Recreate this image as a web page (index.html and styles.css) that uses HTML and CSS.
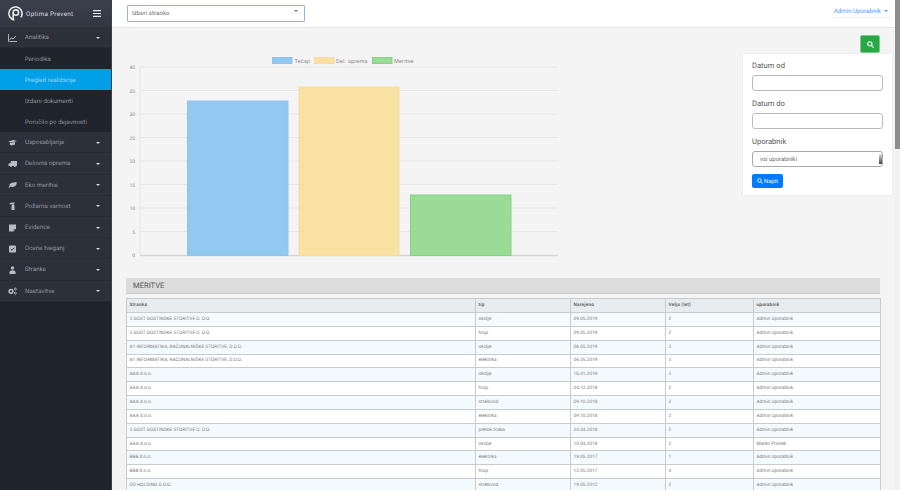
FILE: index.html
```html
<!DOCTYPE html>
<html lang="sl">
<head>
<meta charset="utf-8">
<title>Optima Prevent</title>
<link rel="stylesheet" href="styles.css">
</head>
<body>
<div class="app">
  <aside class="sidebar">
    <div class="brand">
      <svg class="logo" viewBox="0 0 16 16"><circle cx="8" cy="8" r="7" fill="none" stroke="#e8e9ec" stroke-width="1.700" stroke-dasharray="36 8" transform="rotate(100 8 8)"/><circle cx="8.400" cy="7" r="2.900" fill="none" stroke="#e8e9ec" stroke-width="1.700"/><path d="M5.500 7v8" stroke="#e8e9ec" stroke-width="1.700"/></svg>
      <span class="brand-name">Optima Prevent</span>
      <svg class="burger" viewBox="0 0 8 7"><path d="M0 .6h8M0 3.500h8M0 6.400h8" stroke="#e4e5e8" stroke-width="1.200"/></svg>
    </div>
    <nav class="menu">
      <div class="item open"><svg class="ico" viewBox="0 0 9 8"><path d="M.5 0v7.500H9" fill="none" stroke="#b9bcc5" stroke-width=".9"/><path d="M1.500 6l2-2.200 1.500 1.200L8 2" fill="none" stroke="#b9bcc5" stroke-width="1"/></svg><span>Analitika</span><i class="caret"></i></div>
      <div class="sub">Periodika</div>
      <div class="sub active">Pregled realizacije</div>
      <div class="sub">Izdani dokumenti</div>
      <div class="sub">Poročilo po dejavnosti</div>
      <div class="item"><svg class="ico" viewBox="0 0 9 8"><path d="M0 2.400L5.500 1 9 2 3.600 3.600zM1.800 3.600v2.200l1.800.8L7 5.400V3L3.600 4.100z" fill="#b9bcc5"/></svg><span>Usposabljanje</span><i class="caret"></i></div>
      <div class="item"><svg class="ico" viewBox="0 0 9 8"><path d="M3 1h6v5H8a1 1 0 0 1-2 0H4a1 1 0 0 1-2 0H.5V3.800L3 2.600z" fill="#b9bcc5"/></svg><span>Delovna oprema</span><i class="caret"></i></div>
      <div class="item"><svg class="ico" viewBox="0 0 9 8"><path d="M8.600 1C9 4.500 6.500 6.400 3.600 5.800 2.600 5.600 1.800 6.200 1 7L.5 6.500C1.200 5.800 1.700 5 1.500 4.200 1.400 2 4.500 1.800 8.600 1z" fill="#b9bcc5"/></svg><span>Eko meritve</span><i class="caret"></i></div>
      <div class="item"><svg class="ico" viewBox="0 0 9 8"><path d="M1.500 1.200L4 .6h2.500v1L5.500 2v.6a1.500 1.500 0 0 1 1 1.400V8h-3V4a1.500 1.500 0 0 1 1-1.400V2L2 2.600z" fill="#b9bcc5"/></svg><span>Požarna varnost</span><i class="caret"></i></div>
      <div class="item"><svg class="ico" viewBox="0 0 9 8"><path d="M1 .5h7v4.500L5.500 7.500H1z" fill="#b9bcc5"/><path d="M6 7V5.500h2" fill="none" stroke="#2c303b" stroke-width=".6"/></svg><span>Evidence</span><i class="caret"></i></div>
      <div class="item"><svg class="ico" viewBox="0 0 9 8"><rect x="1" y=".5" width="7" height="7" rx="1" fill="#b9bcc5"/><path d="M2.700 4l1.300 1.300L6.500 2.700" fill="none" stroke="#2c303b" stroke-width="1"/></svg><span>Ocene tveganj</span><i class="caret"></i></div>
      <div class="item"><svg class="ico" viewBox="0 0 9 8"><circle cx="4.500" cy="2" r="1.700" fill="#b9bcc5"/><path d="M1.500 8V6.200C1.500 5 2.800 4.200 4.500 4.200S7.500 5 7.500 6.200V8z" fill="#b9bcc5"/></svg><span>Stranke</span><i class="caret"></i></div>
      <div class="item"><svg class="ico" viewBox="0 0 9 8"><circle cx="3" cy="4.300" r="1.900" fill="none" stroke="#b9bcc5" stroke-width="1.500"/><circle cx="7.300" cy="2" r="1" fill="none" stroke="#b9bcc5" stroke-width=".9"/><circle cx="7.300" cy="6.200" r="1" fill="none" stroke="#b9bcc5" stroke-width=".9"/></svg><span>Nastavitve</span><i class="caret"></i></div>
    </nav>
  </aside>

  <div class="main">
    <header class="topbar">
      <div class="client-select"><span>Izberi stranko</span><i class="caret dark"></i></div>
      <div class="user">Admin Uporabnik <i class="caret blue"></i></div>
    </header>

    <main class="content">
      <div class="toolbar">
        <button class="search-toggle" type="button"><svg class="glass" viewBox="0 0 8 8"><circle cx="3.300" cy="3.300" r="2.400" fill="none" stroke="#fff" stroke-width="1.300"/><path d="M5 5l2.500 2.500" stroke="#fff" stroke-width="1.400"/></svg></button>
      </div>
      <div class="top-row">
        <svg class="chart" viewBox="0 0 446 224" role="img">
          <g class="grid">
            <path d="M14 12.500V201"/>
            <path d="M14 13H432M14 36.500h418M14 60h418M14 83.500h418M14 107h418M14 130.500h418M14 154h418M14 177.500h418"/>
            <path class="axis" d="M14 201.500H432"/>
          </g>
          <g class="ticks">
            <text x="9" y="15">40</text><text x="9" y="38.500">35</text><text x="9" y="62">30</text><text x="9" y="85.500">25</text><text x="9" y="109">20</text><text x="9" y="132.500">15</text><text x="9" y="156">10</text><text x="9" y="179.500">5</text><text x="9" y="203">0</text>
          </g>
          <rect class="b-blue" x="61.500" y="47" width="100.500" height="154.500"/>
          <rect class="b-orange" x="173" y="33" width="100" height="168.500"/>
          <rect class="b-green" x="284.500" y="141" width="100.500" height="60.500"/>
          <g class="legend">
            <rect class="b-blue" x="146.500" y="3.500" width="19.500" height="6"/><text x="168.500" y="9">Tečaji</text>
            <rect class="b-orange" x="188.500" y="3.500" width="19.500" height="6"/><text x="210" y="9">Del. oprema</text>
            <rect class="b-green" x="246.500" y="3.500" width="19.500" height="6"/><text x="268" y="9">Meritve</text>
          </g>
        </svg>
        <form class="filter">
          <label class="f-label">Datum od</label>
          <div class="f-input"></div>
          <label class="f-label">Datum do</label>
          <div class="f-input"></div>
          <label class="f-label">Uporabnik</label>
          <div class="f-select"><span>vsi uporabniki</span><b class="spin"></b></div>
          <button class="find" type="button"><svg class="glass small" viewBox="0 0 8 8"><circle cx="3.300" cy="3.300" r="2.400" fill="none" stroke="#fff" stroke-width="1.200"/><path d="M5 5l2.500 2.500" stroke="#fff" stroke-width="1.300"/></svg>Najdi</button>
        </form>
      </div>

      <section class="results">
        <h2 class="results-title">MERITVE</h2>
        <table class="grid-table">
          <colgroup><col class="c1"><col class="c2"><col class="c3"><col class="c4"><col class="c5"></colgroup>
          <thead><tr><th>Stranka</th><th>tip</th><th>Narejeno</th><th>Velja (let)</th><th>uporabnik</th></tr></thead>
          <tbody>
            <tr><td>3 GOST GOSTINSKE STORITVE D. O.O.</td><td>okolje</td><td>09.05.2019</td><td>2</td><td>Admin Uporabnik</td></tr>
            <tr><td>3 GOST GOSTINSKE STORITVE D. O.O.</td><td>hrup</td><td>09.05.2019</td><td>2</td><td>Admin Uporabnik</td></tr>
            <tr><td>A1 INFORMATIKA, RAČUNALNIŠKE STORITVE, D.O.O.</td><td>okolje</td><td>06.05.2019</td><td>3</td><td>Admin Uporabnik</td></tr>
            <tr><td>A1 INFORMATIKA, RAČUNALNIŠKE STORITVE, D.O.O.</td><td>elektrika</td><td>06.05.2019</td><td>3</td><td>Admin Uporabnik</td></tr>
            <tr><td>AAA d.o.o.</td><td>okolje</td><td>16.01.2019</td><td>3</td><td>Admin Uporabnik</td></tr>
            <tr><td>AAA d.o.o.</td><td>hrup</td><td>04.12.2018</td><td>2</td><td>Admin Uporabnik</td></tr>
            <tr><td>AAA d.o.o.</td><td>strelovod</td><td>09.10.2018</td><td>2</td><td>Admin Uporabnik</td></tr>
            <tr><td>AAA d.o.o.</td><td>elektrika</td><td>09.10.2018</td><td>2</td><td>Admin Uporabnik</td></tr>
            <tr><td>3 GOST GOSTINSKE STORITVE D. O.O.</td><td>pretok zraka</td><td>24.04.2018</td><td>2</td><td>Admin Uporabnik</td></tr>
            <tr><td>AAA d.o.o.</td><td>okolje</td><td>10.04.2018</td><td>2</td><td>Marko Primek</td></tr>
            <tr><td>BBB d.o.o.</td><td>elektrika</td><td>19.05.2017</td><td>1</td><td>Admin Uporabnik</td></tr>
            <tr><td>BBB d.o.o.</td><td>hrup</td><td>12.05.2017</td><td>4</td><td>Admin Uporabnik</td></tr>
            <tr><td>DD HOLDING D.O.O.</td><td>strelovod</td><td>19.05.2012</td><td>2</td><td>Admin Uporabnik</td></tr>
          </tbody>
        </table>
      </section>
    </main>
  </div>
  <div class="scrollbar"><div class="thumb"></div></div>
</div>
</body>
</html>
```
FILE: styles.css
```css
* { box-sizing: border-box; }
html, body { margin: 0; height: 100%; overflow: hidden; }
body { font-family: Roboto, "Liberation Sans", sans-serif; color: #555; background: #f4f4f4; text-rendering: geometricPrecision; }

.app { display: flex; width: 900px; height: 490px; overflow: hidden; }

/* Sidebar */
.sidebar { width: 112px; flex: none; background: #1f232c; border-right: 1px solid #3c3f49; }
.brand { height: 27px; display: flex; align-items: center; padding: 0 10px 0 8px; background: linear-gradient(#3c404d, #333744); }
.logo { width: 15px; height: 15px; flex: none; }
.brand-name { margin-left: 3px; font-size: 6.300px; font-weight: 400; letter-spacing: .3px; color: #d9dbe0; white-space: nowrap; flex: 1; }
.burger { width: 8px; height: 7px; flex: none; }

.menu { display: flex; flex-direction: column; }
.item { height: 21.200px; display: flex; align-items: center; padding: 1px 11px 0 8px; background: #2c303b; border-bottom: 1px solid #272a34; font-size: 6px; font-weight: 300; letter-spacing: .18px; color: #c8cbd2; }
.item span { flex: 1; margin-left: 8px; white-space: nowrap; }
.ico { width: 9px; height: 8px; flex: none; }
.caret { width: 0; height: 0; flex: none; border-left: 2.500px solid transparent; border-right: 2.500px solid transparent; border-top: 2.500px solid #d8dae0; }
.sub { height: 21px; padding: 1px 0 0 25px; display: flex; align-items: center; background: #20242d; font-size: 6px; font-weight: 300; letter-spacing: .18px; color: #c8cbd2; white-space: nowrap; }
.sub.active { background: #009fe8; color: #e4f5fd; }

/* Main column */
.main { flex: 1; min-width: 0; display: flex; flex-direction: column; }
.topbar { height: 28px; flex: none; display: flex; align-items: flex-start; justify-content: space-between; padding: 5px 5px 0 15px; background: #fff; border-bottom: 1px solid #e8e8e8; }
.client-select { width: 178px; height: 17px; display: flex; align-items: center; justify-content: space-between; padding: 0 6px 0 4px; border: 1px solid #8fb6e6; border-radius: 1px; font-size: 6px; color: #666; }
.client-select span { letter-spacing: .1px; }
.caret.dark { border-top-color: #777; margin-top: -6px; }
.user { display: flex; align-items: center; gap: 3px; height: 14px; margin-top: -1px; padding-left: 1px; padding-right: 2px; font-size: 6.200px; color: #4d9df2; white-space: nowrap; border-bottom: 1px solid #eee; }
.caret.blue { border-top-color: #4d9df2; border-left-width: 2px; border-right-width: 2px; border-top-width: 2px; }

.content { flex: 1; min-height: 0; padding: 7px 3px 0 14px; }
.toolbar { display: flex; justify-content: flex-end; padding-right: 12px; height: 19px; }
.search-toggle { width: 20px; height: 18px; padding: 0; display: flex; align-items: center; justify-content: center; background: #28a745; border: 1px solid #7ccb8d; border-radius: 2px; }
.glass { width: 7px; height: 7px; display: block; }
.glass.small { width: 6px; height: 6px; margin-right: 1px; }

.top-row { display: flex; justify-content: space-between; align-items: flex-start; height: 224px; }
.chart { width: 446px; height: 224px; display: block; flex: none; }
.grid path { fill: none; stroke: #e6e6e6; stroke-width: 1; }
.grid path.axis { stroke: #d6d6d6; stroke-width: 1.300; }
.ticks text { font-size: 5px; fill: #888; text-anchor: end; font-family: Roboto, sans-serif; }
.legend text { font-size: 5.500px; fill: #888; font-family: Roboto, sans-serif; letter-spacing: .2px; }
.b-blue { fill: #93c9f0; stroke: #8cc5ef; stroke-width: 1; }
.b-orange { fill: #f9e1a4; stroke: #f9dc96; stroke-width: 1; }
.b-green { fill: #9adb97; stroke: #84d384; stroke-width: 1; }

.filter { width: 149px; height: 141px; flex: none; padding: 7px 9px; background: #fff; box-shadow: 0 0 2px rgba(0, 0, 0, .08); display: flex; flex-direction: column; }
.f-label { font-size: 7.600px; line-height: 10px; color: #555; margin-bottom: 4px; }
.f-input { height: 16px; background: #fff; border: 1px solid #bbb; border-radius: 3px; margin-bottom: 8px; flex: none; }
.f-select { height: 16px; flex: none; display: flex; align-items: center; justify-content: space-between; padding-left: 7px; background: #fff; border: 1px solid #aaa; border-radius: 3px; font-size: 6px; color: #666; }
.spin { width: 3px; height: 10px; margin-right: 0; background: linear-gradient(#ddd, #444); }
.find { width: 31px; height: 15px; margin-top: 7px; padding: 0; display: flex; align-items: center; justify-content: center; background: #007bff; border: 0; border-radius: 2px; font-family: inherit; font-size: 6.200px; color: #e8f2ff; }

.results { margin: 0 12px 0 0; }
.results-title { margin: 0; height: 16px; padding-left: 7px; background: #dcdcdc; border-bottom: 1px solid #ccc; font-size: 7.600px; font-weight: 400; line-height: 15px; color: #555; }
.grid-table { width: 754px; margin-top: 4px; border-collapse: collapse; table-layout: fixed; font-size: 4.700px; color: #777; }
.c1 { width: 349px; } .c2 { width: 95px; } .c3 { width: 95px; } .c4 { width: 88px; } .c5 { width: 127px; }
.grid-table th, .grid-table td { height: 13.850px; padding: 0 2.500px; text-align: left; border: 1px solid #c8ccd0; overflow: hidden; white-space: nowrap; }
.grid-table th { height: 14px; background: #e9ecef; font-weight: 700; color: #666; letter-spacing: .2px; }
.grid-table td { background: #fff; letter-spacing: .05px; }
.grid-table tbody tr:nth-child(odd) td { background: #f4fbfe; }

.scrollbar { width: 5px; flex: none; background: #f1f1f1; }
.thumb { height: 149px; background: #8d8d8d; }
```
